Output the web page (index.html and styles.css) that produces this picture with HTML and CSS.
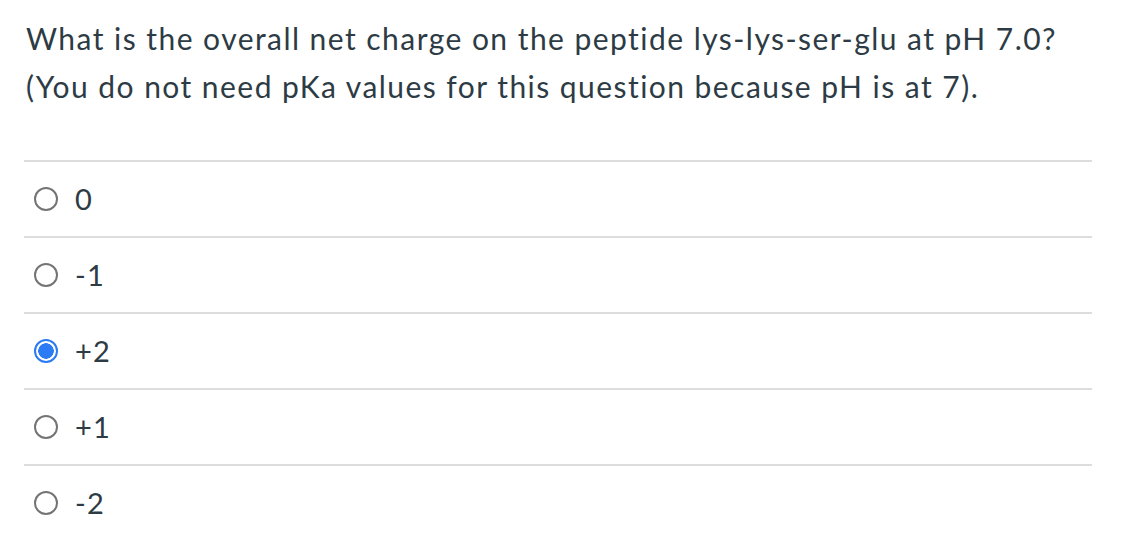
FILE: index.html
```html
<!DOCTYPE html>
<html>
<head>
<meta charset="utf-8">
<link rel="stylesheet" href="styles.css">
</head>
<body>
<div class="question">
  <div class="prompt">What is the overall net charge on the peptide lys-lys-ser-glu at pH 7.0?<br>(You do not need pKa values for this question because pH is at 7).</div>
  <div class="answers">
    <label class="answer"><span class="radio"></span><span class="label">0</span></label>
    <label class="answer"><span class="radio"></span><span class="label">-1</span></label>
    <label class="answer"><span class="radio checked"></span><span class="label">+2</span></label>
    <label class="answer"><span class="radio"></span><span class="label">+1</span></label>
    <label class="answer"><span class="radio"></span><span class="label">-2</span></label>
  </div>
</div>
</body>
</html>
```
FILE: styles.css
```css
html, body {
  margin: 0;
  padding: 0;
  background: #ffffff;
}
body {
  font-family: Lato, "Liberation Sans", sans-serif;
  color: #2d3b45;
}
.question {
  padding: 14px 30px 0 24px;
}
.prompt {
  font-size: 30px;
  line-height: 48px;
  letter-spacing: 1.45px;
  padding-left: 2px;
  margin-bottom: 50px;
  white-space: nowrap;
}
.answer {
  display: flex;
  align-items: center;
  height: 74px;
  border-top: 2px solid #dddddd;
}
.radio {
  box-sizing: border-box;
  width: 24px;
  height: 24px;
  border-radius: 50%;
  border: 2px solid #747474;
  margin-left: 10px;
  margin-right: 17px;
  flex: none;
  background: #fff;
}
.radio.checked {
  border: 2.5px solid #2b7bf5;
  background: radial-gradient(circle, #2b7bf5 0 7.5px, #fff 8px);
}
.label {
  font-size: 29px;
  line-height: 36px;
  letter-spacing: 1.2px;
}
```
